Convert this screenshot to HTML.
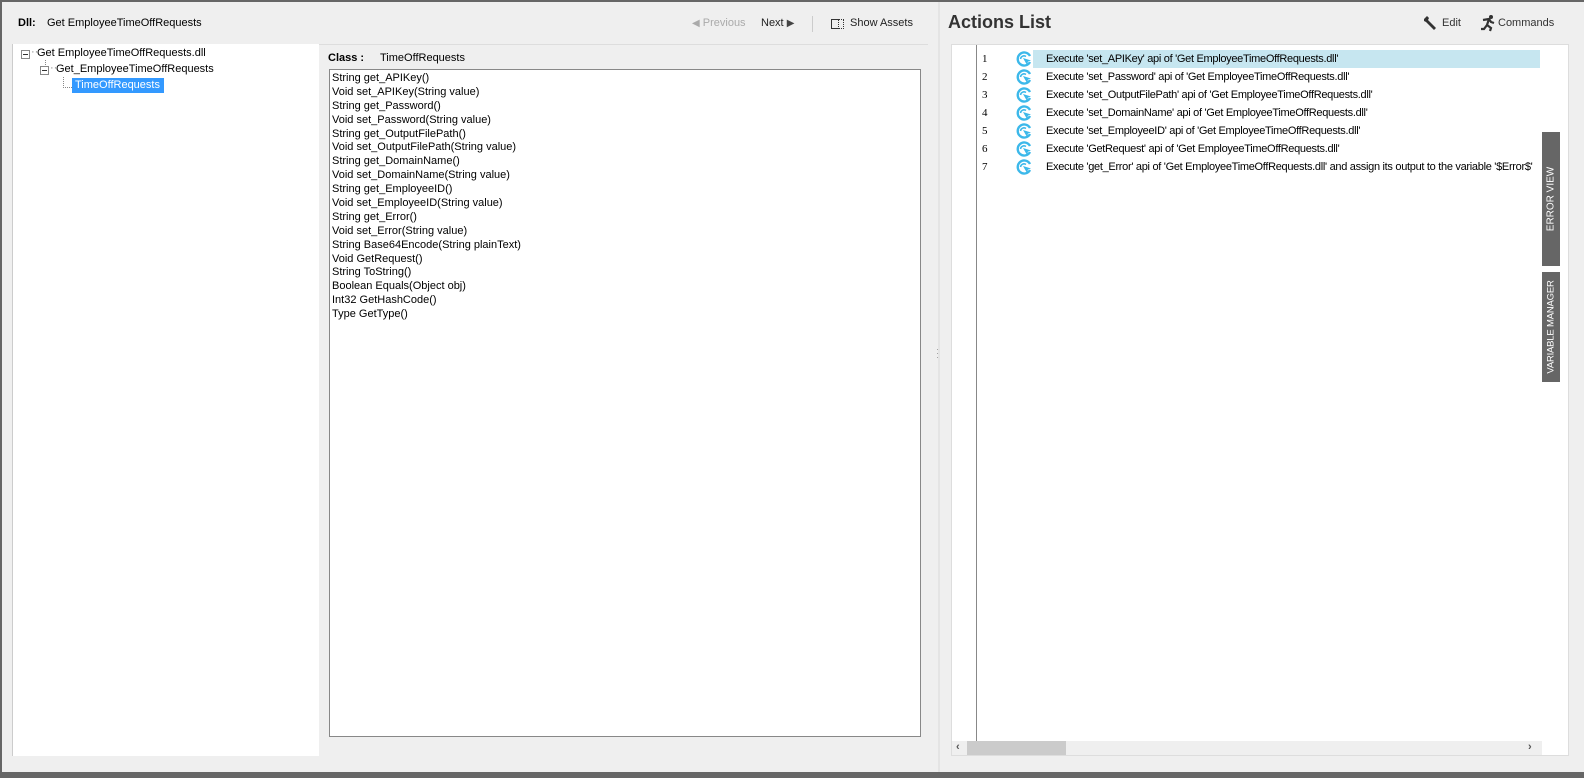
<!DOCTYPE html>
<html><head><meta charset="utf-8"><style>
*{margin:0;padding:0;box-sizing:border-box}
body{width:1584px;height:778px;background:#666;font-family:"Liberation Sans",sans-serif;font-size:11px;color:#000;position:relative;overflow:hidden}
.abs{position:absolute}
#left{left:2px;top:2px;width:936px;height:770px;background:#efefef}
#right{left:940px;top:2px;width:644px;height:770px;background:#efefef}
.t{position:absolute;white-space:nowrap}
.methods div{height:13.9px;line-height:13.9px}
.row{position:absolute;left:0;height:18px;line-height:18px;white-space:nowrap}
.tab{position:absolute;background:#666;color:#fff;width:18px;font-size:10px}
.tab span{position:absolute;left:50%;top:50%;transform:translate(-50%,-50%) rotate(-90deg);white-space:nowrap}
</style></head><body>
<div id="left" class="abs">
  <div class="t" style="left:16px;top:15px;font-weight:bold">Dll:</div>
  <div class="t" style="left:45px;top:15px">Get EmployeeTimeOffRequests</div>
  <div class="t" style="left:690px;top:15px;color:#aaa"><span style="font-size:10px">◀</span> Previous</div>
  <div class="t" style="left:759px;top:15px;color:#222">Next <span style="font-size:10px;color:#444">▶</span></div>
  <div class="abs" style="left:810px;top:14px;width:1px;height:16px;background:#ccc"></div>
  <div class="abs" style="left:829px;top:17px;width:8px;height:10px;border:1px solid #333;border-right:1px dotted #333"></div>
  <div class="abs" style="left:837px;top:17px;width:5px;height:10px;border-right:1px dotted #333;border-top:1px dotted #333;border-bottom:1px dotted #333"></div>
  <div class="t" style="left:848px;top:15px;color:#222">Show Assets</div>
  <div class="abs" style="left:10px;top:42px;width:916px;height:1px;background:#ddd"></div>
  <div class="abs" style="left:10px;top:42px;width:307px;height:712px;background:#fff;border-left:1px solid #ccc"></div>
  <div class="abs" style="left:19px;top:48px;width:9px;height:9px;border:1px solid #888;background:#fff"><div style="position:absolute;left:1px;top:3px;width:5px;height:1px;background:#333"></div></div>
  <div class="t" style="left:29px;top:44px;color:#888">··</div>
  <div class="t" style="left:35px;top:45px">Get EmployeeTimeOffRequests.dll</div>
  <div class="abs" style="left:43px;top:58px;height:5px;border-left:1px dotted #888"></div>
  <div class="abs" style="left:38px;top:64px;width:9px;height:9px;border:1px solid #888;background:#fff"><div style="position:absolute;left:1px;top:3px;width:5px;height:1px;background:#333"></div></div>
  <div class="t" style="left:48px;top:60px;color:#888">··</div>
  <div class="t" style="left:54px;top:61px">Get_EmployeeTimeOffRequests</div>
  <div class="abs" style="left:61px;top:75px;height:11px;border-left:1px dotted #888"></div>
  <div class="abs" style="left:61px;top:85px;width:9px;border-top:1px dotted #888"></div>
  <div class="abs" style="left:70px;top:76px;width:92px;height:15px;background:#3399ff"></div>
  <div class="t" style="left:73px;top:77px;color:#fff">TimeOffRequests</div>
  <div class="t" style="left:326px;top:50px;font-weight:bold">Class :</div>
  <div class="t" style="left:378px;top:50px">TimeOffRequests</div>
  <div class="abs methods" style="left:327px;top:67px;width:592px;height:668px;background:#fff;border:1px solid #888;padding:2px 0 0 2px">
    <div>String get_APIKey()</div><div>Void set_APIKey(String value)</div><div>String get_Password()</div><div>Void set_Password(String value)</div><div>String get_OutputFilePath()</div><div>Void set_OutputFilePath(String value)</div><div>String get_DomainName()</div><div>Void set_DomainName(String value)</div><div>String get_EmployeeID()</div><div>Void set_EmployeeID(String value)</div><div>String get_Error()</div><div>Void set_Error(String value)</div><div>String Base64Encode(String plainText)</div><div>Void GetRequest()</div><div>String ToString()</div><div>Boolean Equals(Object obj)</div><div>Int32 GetHashCode()</div><div>Type GetType()</div>
  </div>
</div>
<div class="abs" style="left:938px;top:2px;width:2px;height:770px;background:#e4e4e4"></div>
<div class="t" style="left:936px;top:347px;color:#999;font-size:9px;line-height:4px">·<br>·<br>·</div>
<div id="right" class="abs">
  <div class="t" style="left:8px;top:10px;font-size:18px;font-weight:bold;color:#333">Actions List</div>
  <svg class="abs" style="left:482px;top:13px" width="16" height="16" viewBox="0 0 16 16"><path d="M2 4 L5 1 L7 3 L6 5 L14 13 L12 15 L4 7 L2 6 Z" fill="#333"/></svg>
  <div class="t" style="left:502px;top:15px;color:#333">Edit</div>
  <svg class="abs" style="left:540px;top:12px" width="16" height="18" viewBox="0 0 16 18"><circle cx="11" cy="3" r="2" fill="#333"/><path d="M3 6 L9 5 L11 8 L14 9 M9 5 L7 11 L11 14 L10 17 M7 11 L4 15 L1 15" stroke="#333" stroke-width="2.2" fill="none"/></svg>
  <div class="t" style="left:558px;top:15px;color:#333">Commands</div>
  <div class="abs" style="left:11px;top:42px;width:618px;height:712px;background:#fff;border:1px solid #ddd;overflow:hidden">
    <div class="abs" style="left:24px;top:0;width:1px;height:696px;background:#888"></div>
    <div class="abs" style="left:81px;top:5px;width:507px;height:18px;background:#c6e6f0"></div>
    <div class="abs" style="left:0;top:5px;width:600px;font-size:11px;font-family:'Liberation Serif',serif">
      <div class="row" style="top:0;left:30px">1</div>
      <div class="row" style="top:18px;left:30px">2</div>
      <div class="row" style="top:36px;left:30px">3</div>
      <div class="row" style="top:54px;left:30px">4</div>
      <div class="row" style="top:72px;left:30px">5</div>
      <div class="row" style="top:90px;left:30px">6</div>
      <div class="row" style="top:108px;left:30px">7</div>
    </div>
    <svg class="abs" style="left:64px;top:6px" width="18" height="126" viewBox="0 0 18 126">
      <defs><g id="ic"><path d="M14 5 A6.5 6.5 0 1 0 14 11" stroke="#3cb8ea" stroke-width="2.4" fill="none"/><path d="M4.5 8 A3.5 3.5 0 0 1 10 5.5" stroke="#3cb8ea" stroke-width="1.6" fill="none"/><path d="M7 7 L15 9.5 L12 10.5 L11 14 Z" fill="#3cb8ea"/></g></defs>
      <use href="#ic" y="0"/><use href="#ic" y="18"/><use href="#ic" y="36"/><use href="#ic" y="54"/><use href="#ic" y="72"/><use href="#ic" y="90"/><use href="#ic" y="108"/>
    </svg>
    <div class="abs" style="left:94px;top:5px;letter-spacing:-0.3px">
      <div class="row" style="top:0">Execute 'set_APIKey' api of 'Get EmployeeTimeOffRequests.dll'</div>
      <div class="row" style="top:18px">Execute 'set_Password' api of 'Get EmployeeTimeOffRequests.dll'</div>
      <div class="row" style="top:36px">Execute 'set_OutputFilePath' api of 'Get EmployeeTimeOffRequests.dll'</div>
      <div class="row" style="top:54px">Execute 'set_DomainName' api of 'Get EmployeeTimeOffRequests.dll'</div>
      <div class="row" style="top:72px">Execute 'set_EmployeeID' api of 'Get EmployeeTimeOffRequests.dll'</div>
      <div class="row" style="top:90px">Execute 'GetRequest' api of 'Get EmployeeTimeOffRequests.dll'</div>
      <div class="row" style="top:108px">Execute 'get_Error' api of 'Get EmployeeTimeOffRequests.dll' and assign its output to the variable '$Error$'</div>
    </div>
    <div class="abs" style="left:0;top:696px;width:590px;height:15px;background:#efefef"></div>
    <div class="abs" style="left:15px;top:696px;width:99px;height:15px;background:#cbcbcb"></div>
    <div class="t" style="left:4px;top:696px;color:#555;font-weight:bold">‹</div>
    <div class="t" style="left:576px;top:696px;color:#555;font-weight:bold">›</div>
  </div>
  <div class="tab" style="left:602px;top:130px;height:134px"><span>ERROR VIEW</span></div>
  <div class="tab" style="left:602px;top:270px;height:110px"><span style="font-size:9.5px;letter-spacing:-0.2px">VARIABLE MANAGER</span></div>
</div>
</body></html>
